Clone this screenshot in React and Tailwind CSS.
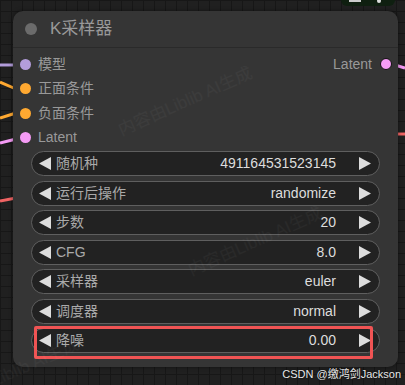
import React from 'react';

const font = { fontFamily: '"Liberation Sans", "Noto Sans CJK SC", sans-serif' };

const inputs = [
  { label: '模型', color: 'bg-[#b39ddb]' },
  { label: '正面条件', color: 'bg-[#ffa931]' },
  { label: '负面条件', color: 'bg-[#ffa931]' },
  { label: 'Latent', color: 'bg-[#f59bf5]' },
];

const widgets = [
  { label: '随机种', value: '491164531523145' },
  { label: '运行后操作', value: 'randomize' },
  { label: '步数', value: '20' },
  { label: 'CFG', value: '8.0' },
  { label: '采样器', value: 'euler' },
  { label: '调度器', value: 'normal' },
  { label: '降噪', value: '0.00' },
];

function Arrow({ dir }) {
  return (
    <svg width="12" height="13" viewBox="0 0 12 13" className="shrink-0">
      {dir === 'left' ? (
        <polygon points="12,0 12,13 0,6.5" fill="#dddddd" />
      ) : (
        <polygon points="0,0 0,13 12,6.5" fill="#dddddd" />
      )}
    </svg>
  );
}

function Watermark({ className }) {
  return (
    <div
      className={`absolute whitespace-nowrap text-[17px] text-white/[0.035] -rotate-[24deg] pointer-events-none ${className}`}
    >
      内容由Liblib AI生成
    </div>
  );
}

export default function App() {
  return (
    <div
      className="relative w-[405px] h-[385px] overflow-hidden bg-[#202020] bg-[linear-gradient(to_right,#171717_1px,transparent_1px),linear-gradient(to_bottom,#171717_1px,transparent_1px)] bg-[size:11px_11px]"
      style={font}
    >
      {/* wires */}
      <svg className="absolute inset-0" width="405" height="385">
        <line x1="0" y1="65" x2="16" y2="65" stroke="#b39ddb" strokeWidth="3" />
        <line x1="0" y1="82" x2="16" y2="89" stroke="#ffa931" strokeWidth="3" />
        <line x1="0" y1="118" x2="16" y2="113" stroke="#ffa931" strokeWidth="3" />
        <line x1="0" y1="143" x2="16" y2="139" stroke="#f59bf5" strokeWidth="3" />
        <line x1="0" y1="201" x2="16" y2="198" stroke="#f06464" strokeWidth="3" />
        <line x1="395" y1="65" x2="405" y2="68" stroke="#f59bf5" strokeWidth="3" />
        <line x1="395" y1="134" x2="405" y2="134" stroke="#f06464" strokeWidth="3" />
      </svg>

      {/* top-right node fragment */}
      <div className="absolute left-[341px] top-[-8px] w-[54px] h-[14px] rounded-md bg-[#0f1f10]">
        <div className="absolute left-[8px] top-[8px] w-[12px] h-[2px] bg-[#cccccc]" />
        <div className="absolute left-[36px] top-[7px] w-[4px] h-[4px] rounded-full bg-[#dddddd]" />
      </div>

      {/* node */}
      <div className="relative ml-[13px] mt-[11px] w-[385px] h-[356px] rounded-[10px] bg-[#353535] shadow-[0_0_4px_rgba(0,0,0,0.5)]">
        <div className="flex items-center h-[37px] pl-[12px] border-b border-[#2a2a2a]">
          <div className="w-[12px] h-[12px] rounded-full bg-[#6b6b6b]" />
          <div className="ml-[13px] text-[17px] text-[#999999]">K采样器</div>
        </div>

        <div className="relative pt-[4px]">
          {inputs.map((s) => (
            <div key={s.label} className="flex items-center h-[24.5px] pl-[7px]">
              <div className={`w-[11px] h-[11px] rounded-full ${s.color}`} />
              <div className="ml-[7px] text-[14px] text-[#999999]">{s.label}</div>
            </div>
          ))}
          <div className="absolute right-[6px] top-[4px] h-[24.5px] flex items-center">
            <div className="text-[14px] text-[#999999]">Latent</div>
            <div className="ml-[8px] w-[12px] h-[12px] rounded-full bg-[#f59bf5] border-[1.5px] border-[#111111]" />
          </div>
        </div>

        <div className="flex flex-col gap-[4.5px] px-[18px] mt-[1px]">
          {widgets.map((w) => (
            <div
              key={w.label}
              className="flex items-center h-[25px] rounded-full bg-[#222222] border border-[#5f5f5f] pl-[7px] pr-[8px]"
            >
              <Arrow dir="left" />
              <div className="ml-[5px] text-[14px] text-[#aaaaaa]">{w.label}</div>
              <div className="ml-auto mr-[23px] text-[14px] text-[#dddddd]">{w.value}</div>
              <Arrow dir="right" />
            </div>
          ))}
        </div>

        {/* highlight */}
        <div className="absolute left-[21px] top-[315px] w-[339px] h-[33px] border-[3px] border-[#f05454] rounded-[2px]" />

        <Watermark className="left-[100px] top-[78px]" />
        <Watermark className="left-[170px] top-[218px]" />
      </div>

      <Watermark className="left-[-60px] top-[360px]" />

      <div className="absolute right-[4px] bottom-[3px] text-[11px] text-[#e8e8e8] [text-shadow:0_0_2px_#000]">
        CSDN @缴鸿剑Jackson
      </div>
    </div>
  );
}
